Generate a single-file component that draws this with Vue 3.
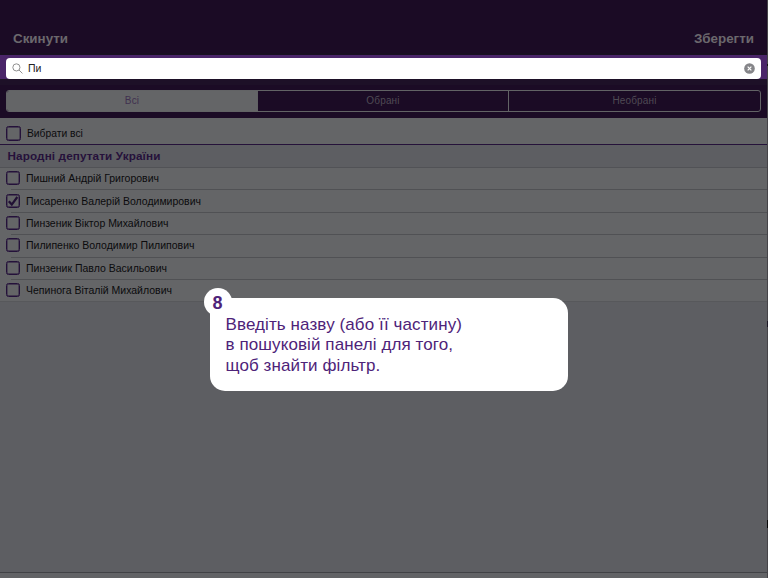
<script setup>
import { ref } from 'vue'
const query = ref('Пи')
const tabs = ['Всі', 'Обрані', 'Необрані']
const people = ref([
  { name: 'Пишний Андрій Григорович', on: false, width: 133 },
  { name: 'Писаренко Валерій Володимирович', on: true, width: 175 },
  { name: 'Пинзеник Віктор Михайлович', on: false, width: 142.5 },
  { name: 'Пилипенко Володимир Пилипович', on: false, width: 168.5 },
  { name: 'Пинзеник Павло Васильович', on: false, width: 141 },
  { name: 'Чепинога Віталій Михайлович', on: false, width: 146 },
])
</script>

<template>
  <main class="screen">
    <header class="toolbar">
      <span>Скинути</span>
      <span>Зберегти</span>
    </header>
    <div class="search-wrap">
      <div class="search">
        <svg class="lens" viewBox="0 0 12 12"><circle cx="4.8" cy="4.8" r="3.9" /><path d="M7.6 7.6 11.4 11.4" /></svg>
        <span class="query">{{ query }}</span>
        <svg class="clear" viewBox="0 0 12 12"><circle cx="6" cy="6" r="5.8" /><path d="M4 4 8 8M8 4 4 8" /></svg>
      </div>
    </div>
    <div class="tabs-wrap">
      <nav class="tabs">
        <span v-for="(t, i) in tabs" :key="t" class="tab" :class="{ active: i === 0 }">{{ t }}</span>
      </nav>
    </div>
    <div class="all"><i class="box"></i><span>Вибрати всі</span></div>
    <h2 class="section">Народні депутати України</h2>
    <ul class="list">
      <li v-for="p in people" :key="p.name" class="row">
        <i class="box">
          <svg v-if="p.on" viewBox="0 0 12 12"><path d="M1.8 6.2 4.8 9.6 10.3 2" /></svg>
        </i>
        <svg class="name" width="200" height="16"><text x="0" y="11.5" :textLength="p.width" lengthAdjust="spacingAndGlyphs">{{ p.name }}</text></svg>
      </li>
    </ul>
    <div class="blank"></div>
    <footer class="bottom"></footer>
    <aside class="tip">
      <b class="badge">8</b>
      <p>Введіть назву (або її частину)<br>в пошуковій панелі для того,<br>щоб знайти фільтр.</p>
    </aside>
  </main>
</template>

<style>
body { margin: 0; overflow: hidden; }
</style>

<style scoped>
.screen {
  position: relative;
  display: flex;
  flex-direction: column;
  box-sizing: border-box;
  width: 768px;
  height: 578px;
  overflow: hidden;
  background: #5d5e62;
  font-family: "Liberation Sans", Arial, sans-serif;
  color: #0b0b0d;
}
.screen::after {
  content: "";
  position: absolute;
  right: 0;
  top: 0;
  width: 1px;
  height: 578px;
  background: linear-gradient(#454448 64px, #111 64px, #111 66px, #454448 66px, #454448 321px, #1c1724 321px, #1c1724 327px, #454448 327px, #454448 520px, #080808 520px, #080808 528px, #454448 528px);
}
.toolbar {
  display: flex;
  justify-content: space-between;
  box-sizing: border-box;
  height: 55px;
  padding: 31px 14px 0 13px;
  background: #1b0b25;
  border-bottom: 2px solid #180f20;
  color: #6b686d;
  font-size: 13.4px;
  line-height: 16px;
  font-weight: bold;
}
.search-wrap {
  box-sizing: border-box;
  height: 24px;
  padding: 3px 7px 0 6px;
  background: #4a2569;
}
.search {
  display: flex;
  align-items: center;
  box-sizing: border-box;
  height: 21px;
  padding: 0 6px;
  border-radius: 4px;
  background: #fff;
}
.lens { width: 11px; height: 11px; fill: none; stroke: #858585; stroke-width: 1; }
.query { flex: 1; margin-left: 5px; font-size: 10.5px; line-height: 19px; color: #222; }
.clear { width: 11px; height: 11px; fill: #858589; }
.clear path { stroke: #fff; stroke-width: 1.3; }
.tabs-wrap {
  box-sizing: border-box;
  height: 39px;
  padding: 5px 7px 0 6px;
  background: #1b0b25;
  border-top: 6px solid #1d1027;
}
.tabs {
  display: grid;
  grid-template-columns: 250px 251px 1fr;
  box-sizing: border-box;
  height: 22px;
  border: 1px solid #626365;
  border-radius: 3px;
  overflow: hidden;
}
.tab {
  border-left: 1px solid #626365;
  text-align: center;
  font-size: 10px;
  line-height: 19px;
  letter-spacing: 0.15px;
  color: #4f4a54;
}
.tab.active { border-left: 0; background: #646567; color: #40304f; }
.all {
  display: flex;
  align-items: center;
  box-sizing: border-box;
  height: 27px;
  padding: 4px 0 0 6px;
  border-bottom: 1px solid #25123a;
  background: #646567;
  font-size: 10.3px;
}
.all span { margin-left: 6px; }
.section {
  box-sizing: border-box;
  height: 23px;
  margin: 0;
  padding-left: 7.5px;
  border-bottom: 1px solid #515256;
  background: #5d5e62;
  color: #26113b;
  font-size: 11.7px;
  line-height: 22px;
  letter-spacing: 0.13px;
}
.list { margin: 0; padding: 0; list-style: none; background: #646567; border-bottom: 1px solid #57585b; }
.row {
  display: flex;
  align-items: center;
  box-sizing: border-box;
  height: 22.4px;
  padding: 0 0 2px 6px;
  background: linear-gradient(#505154, #505154) 11px 100% / 757px 1px no-repeat;
}
.row:last-child { height: 21px; padding-bottom: 0; background: none; }
.box {
  display: flex;
  box-sizing: border-box;
  flex: none;
  width: 14px;
  height: 14px;
  border: 1px solid #24113a;
  border-radius: 2.5px;
  box-shadow: inset 0 0 0 0.4px #24113a;
}
.all .box { width: 15px; height: 15px; }
.box svg { width: 12px; height: 12px; fill: none; stroke: #211034; stroke-width: 2.2; }
.name { margin-left: 6px; font-size: 10.3px; fill: #0b0b0d; }
.blank { flex: 1; }
.bottom { height: 5px; border-top: 1px solid #414246; background: #626366; }
.tip {
  position: absolute;
  left: 210px;
  top: 298px;
  box-sizing: border-box;
  width: 357.5px;
  height: 93px;
  padding: 17px 15.5px;
  border-radius: 15px;
  background: #fff;
  color: #4e2379;
}
.tip p { margin: 0; font-size: 17px; line-height: 20.3px; letter-spacing: 0.1px; white-space: nowrap; }
.badge {
  position: absolute;
  left: -6.5px;
  top: -10px;
  width: 28px;
  height: 28px;
  border-radius: 50%;
  background: #fff;
  text-align: center;
  font-size: 18px;
  line-height: 30px;
}
</style>
